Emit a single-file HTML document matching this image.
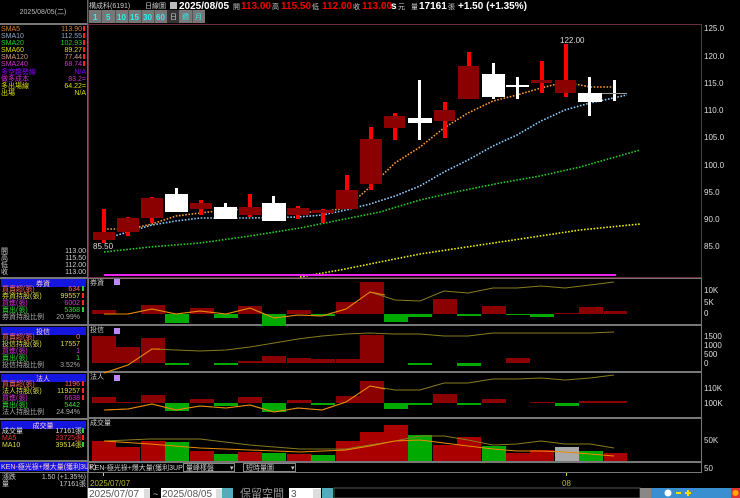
<!DOCTYPE html>
<html><head><meta charset="utf-8"><style>
body{margin:0;background:#000;width:740px;height:498px;overflow:hidden}
svg{display:block}
text{font-family:"Liberation Sans","Noto Sans CJK TC",sans-serif}
.s{font-size:7px}
.b{font-size:10px;font-weight:bold}
.ax{font-size:8px;fill:#ddd}
</style></head><body>
<svg width="740" height="498" viewBox="0 0 740 498" xmlns="http://www.w3.org/2000/svg">
<rect width="740" height="498" fill="#000"/>
<!-- left panel -->
<text x="43" y="14" class="s" fill="#bbb" text-anchor="middle">2025/08/05(二)</text>
<rect x="0" y="23" width="88" height="2" fill="#777"/>
<rect x="87" y="0" width="1.5" height="498" fill="#666"/>
<g class="s">
<text x="1" y="31" fill="#d08030">SMA5</text><text x="82" y="31" fill="#d08030" text-anchor="end">113.90</text>
<text x="1" y="38" fill="#8ac">SMA10</text><text x="82" y="38" fill="#8ac" text-anchor="end">112.55</text>
<text x="1" y="45" fill="#2c2">SMA20</text><text x="82" y="45" fill="#2c2" text-anchor="end">102.93</text>
<text x="1" y="52" fill="#dd0">SMA60</text><text x="82" y="52" fill="#dd0" text-anchor="end">89.27</text>
<text x="1" y="59" fill="#c98">SMA120</text><text x="82" y="59" fill="#c98" text-anchor="end">77.44</text>
<text x="1" y="66" fill="#c3c">SMA240</text><text x="82" y="66" fill="#c3c" text-anchor="end">68.74</text>
<text x="1" y="74" fill="#80f">多空趨勢線</text><text x="86" y="74" fill="#80f" text-anchor="end">N/A</text>
<text x="1" y="81" fill="#c3c">做多成本</text><text x="86" y="81" fill="#c3c" text-anchor="end">83.2=</text>
<text x="1" y="88" fill="#dd0">多出場線</text><text x="86" y="88" fill="#dd0" text-anchor="end">64.22=</text>
<text x="1" y="95" fill="#dd0">出場</text><text x="86" y="95" fill="#dd0" text-anchor="end">N/A</text>
</g>
<g fill="#f22"><rect x="83" y="26" width="2" height="5"/><rect x="83" y="33" width="2" height="5"/><rect x="83" y="40" width="2" height="5"/><rect x="83" y="47" width="2" height="5"/><rect x="83" y="54" width="2" height="5"/><rect x="83" y="61" width="2" height="5"/></g>
<g class="s" fill="#ccc">
<text x="1" y="253">開</text><text x="86" y="253" text-anchor="end">113.00</text>
<text x="1" y="260">高</text><text x="86" y="260" text-anchor="end">115.50</text>
<text x="1" y="267">低</text><text x="86" y="267" text-anchor="end">112.00</text>
<text x="1" y="274">收</text><text x="86" y="274" text-anchor="end">113.00</text>
</g>
<rect x="0" y="277" width="88" height="2" fill="#777"/>
<!-- section headers -->
<g>
<rect x="1" y="279" width="85" height="8" fill="#1515e0"/><text x="43" y="286" class="s" fill="#fcc" text-anchor="middle">券資</text>
<rect x="0" y="324" width="88" height="2" fill="#777"/>
<rect x="1" y="327" width="85" height="8" fill="#1515e0"/><text x="43" y="334" class="s" fill="#fcc" text-anchor="middle">投信</text>
<rect x="0" y="371" width="88" height="2" fill="#777"/>
<rect x="1" y="374" width="85" height="8" fill="#1515e0"/><text x="43" y="381" class="s" fill="#fcc" text-anchor="middle">法人</text>
<rect x="0" y="418" width="88" height="2" fill="#777"/>
<rect x="1" y="421" width="85" height="8" fill="#1515e0"/><text x="43" y="428" class="s" fill="#fcc" text-anchor="middle">成交量</text>
<rect x="0" y="460" width="88" height="2" fill="#777"/>
<rect x="0" y="462" width="87" height="9" fill="#1515e0"/><text x="1" y="469" class="s" fill="#fcc">KEN-極光祿+爆大量(獲利3UP)</text>
<rect x="0" y="472" width="88" height="1" fill="#777"/>
</g>
<g class="s">
<text x="2" y="291" fill="#f66">買賣超(張)</text><text x="80" y="291" fill="#f66" text-anchor="end">634</text>
<text x="2" y="298" fill="#dd4">券資持股(張)</text><text x="80" y="298" fill="#dd4" text-anchor="end">99557</text>
<text x="2" y="305" fill="#d3d">買進(張)</text><text x="80" y="305" fill="#d3d" text-anchor="end">6002</text>
<text x="2" y="312" fill="#3d3">賣出(張)</text><text x="80" y="312" fill="#3d3" text-anchor="end">5368</text>
<text x="2" y="319" fill="#aaa">券資持股比例</text><text x="80" y="319" fill="#aaa" text-anchor="end">20.99%</text>
<text x="2" y="339" fill="#f66">買賣超(張)</text><text x="80" y="339" fill="#f66" text-anchor="end">0</text>
<text x="2" y="346" fill="#dd4">投信持股(張)</text><text x="80" y="346" fill="#dd4" text-anchor="end">17557</text>
<text x="2" y="353" fill="#d3d">買進(張)</text><text x="80" y="353" fill="#d3d" text-anchor="end">1</text>
<text x="2" y="360" fill="#3d3">賣出(張)</text><text x="80" y="360" fill="#3d3" text-anchor="end">1</text>
<text x="2" y="367" fill="#aaa">投信持股比例</text><text x="80" y="367" fill="#aaa" text-anchor="end">3.52%</text>
<text x="2" y="386" fill="#f66">買賣超(張)</text><text x="80" y="386" fill="#f66" text-anchor="end">1196</text>
<text x="2" y="393" fill="#dd4">法人持股(張)</text><text x="80" y="393" fill="#dd4" text-anchor="end">119257</text>
<text x="2" y="400" fill="#d3d">買進(張)</text><text x="80" y="400" fill="#d3d" text-anchor="end">6638</text>
<text x="2" y="407" fill="#3d3">賣出(張)</text><text x="80" y="407" fill="#3d3" text-anchor="end">5442</text>
<text x="2" y="414" fill="#aaa">法人持股比例</text><text x="80" y="414" fill="#aaa" text-anchor="end">24.94%</text>
<text x="2" y="433" fill="#ddd">成交量</text><text x="82" y="433" fill="#ddd" text-anchor="end">17161張</text>
<text x="2" y="440" fill="#e33">MA5</text><text x="82" y="440" fill="#e33" text-anchor="end">23725張</text>
<text x="2" y="447" fill="#dd4">MA10</text><text x="82" y="447" fill="#dd4" text-anchor="end">39514張</text>
<text x="2" y="479" fill="#ccc">漲跌</text><text x="86" y="479" fill="#ccc" text-anchor="end">1.50 (+1.35%)</text>
<text x="2" y="486" fill="#ccc">量</text><text x="86" y="486" fill="#ccc" text-anchor="end">17161張</text>
</g>
<g fill="#3c3"><rect x="82" y="286" width="2" height="5"/><rect x="82" y="307" width="2" height="5"/><rect x="82" y="428" width="2" height="5"/><rect x="82" y="442" width="2" height="5"/></g>
<g fill="#f22"><rect x="82" y="293" width="2" height="5"/><rect x="82" y="300" width="2" height="5"/><rect x="82" y="381" width="2" height="5"/><rect x="82" y="388" width="2" height="5"/><rect x="82" y="395" width="2" height="5"/><rect x="82" y="435" width="2" height="5"/></g>

<!-- top bar -->
<text x="89" y="8" class="s" fill="#ccc">構成科(6191)</text>
<text x="145" y="8" class="s" fill="#ccc">日線圖</text>
<rect x="170" y="2" width="7" height="7" fill="#bbb"/>
<text x="179" y="9" class="b" fill="#fff">2025/08/05</text>
<text x="233" y="9" class="s" fill="#ccc">開</text><text x="241" y="9" class="b" fill="#e00">113.00</text>
<text x="272" y="9" class="s" fill="#ccc">高</text><text x="281" y="9" class="b" fill="#e00">115.50</text>
<text x="312" y="9" class="s" fill="#ccc">低</text><text x="322" y="9" class="b" fill="#e00">112.00</text>
<text x="353" y="9" class="s" fill="#ccc">收</text><text x="362" y="9" class="b" fill="#e00">113.00</text>
<text x="391" y="9" class="b" fill="#fff">s</text><text x="398" y="9" class="s" fill="#ccc">元</text>
<text x="411" y="9" class="s" fill="#ccc">量</text><text x="419" y="9" class="b" fill="#fff">17161</text><text x="448" y="9" class="s" fill="#ccc">張</text>
<text x="458" y="9" class="b" fill="#fff">+1.50 (+1.35%)</text>
<g>
<rect x="89" y="10" width="116" height="13" fill="#777"/>
<rect x="167" y="10" width="12" height="13" fill="#333"/>
<g font-size="8" font-weight="bold" fill="#3ee">
<text x="93" y="20">1</text><text x="106" y="20">5</text><text x="117" y="20">10</text><text x="130" y="20">15</text><text x="143" y="20">30</text><text x="156" y="20">60</text></g>
<g class="s" fill="#ccc"><text x="170" y="19">日</text></g>
<g class="s" fill="#3ee"><text x="182" y="19">週</text><text x="195" y="19">月</text></g>
<g stroke="#555"><line x1="101.5" y1="10" x2="101.5" y2="23"/><line x1="115.5" y1="10" x2="115.5" y2="23"/><line x1="128.5" y1="10" x2="128.5" y2="23"/><line x1="141.5" y1="10" x2="141.5" y2="23"/><line x1="154.5" y1="10" x2="154.5" y2="23"/><line x1="192.5" y1="10" x2="192.5" y2="23"/></g>
</g>

<!-- main chart frame -->
<rect x="88.5" y="24.5" width="613" height="253" fill="none" stroke="#6a2c44"/>
<g class="ax">
<text x="704" y="31">125.0</text><text x="704" y="59">120.0</text><text x="704" y="86">115.0</text><text x="704" y="113">110.0</text><text x="704" y="140">105.0</text><text x="704" y="168">100.0</text><text x="704" y="195">95.0</text><text x="704" y="222">90.0</text><text x="704" y="249">85.0</text>
</g>
<!-- MAs -->
<g fill="none" stroke-width="1.6" stroke-dasharray="1.6 1.6">
<polyline stroke="#ee0" points="300,277 340,270 380,262 420,254 460,248 500,242 540,236 580,230 640,224"/>
<polyline stroke="#2c2" points="104,252 150,247 200,243 250,236 300,228 340,220 380,212 420,200 460,191 500,183 540,176 580,167 640,150"/>
<polyline stroke="#8cf" points="104,239 128,232 152,225 176,221 200,218 250,218 298,217 322,215 346,210 370,204 395,196 420,186 444,172 468,160 493,146 517,135 541,121 565,110 590,103 627,95"/>
<polyline stroke="#f93" points="104,229 130,229 152,224 176,216 200,213 226,210 250,209 274,211 298,212 322,212 346,208 370,187 395,163 420,147 444,128 468,113 493,101 517,95 541,88 565,82 590,87 614,87"/>
</g>
<!-- candles -->
<g>
<g fill="#f00">
<rect x="102" y="209" width="4" height="34"/><rect x="126" y="217" width="4" height="19"/><rect x="150" y="197" width="4" height="26"/><rect x="199" y="200" width="4" height="15"/><rect x="248" y="194" width="4" height="23"/><rect x="296" y="206" width="4" height="13"/><rect x="321" y="209" width="4" height="14"/><rect x="345" y="175" width="4" height="34"/><rect x="369" y="127" width="4" height="63"/><rect x="393" y="113" width="4" height="27"/><rect x="443" y="102" width="4" height="36"/><rect x="467" y="52" width="4" height="47"/><rect x="540" y="61" width="4" height="32"/><rect x="564" y="44" width="4" height="53"/>
</g>
<g fill="#8b0000">
<rect x="93" y="232" width="22" height="8"/><rect x="117" y="218" width="22" height="14"/><rect x="141" y="198" width="22" height="20"/><rect x="190" y="203" width="22" height="6"/><rect x="239" y="207" width="22" height="8"/><rect x="287" y="208" width="22" height="7"/><rect x="312" y="210" width="22" height="3"/><rect x="336" y="190" width="22" height="19"/><rect x="360" y="139" width="22" height="45"/><rect x="384" y="116" width="21" height="12"/><rect x="434" y="110" width="21" height="11"/><rect x="458" y="66" width="21" height="33"/><rect x="531" y="80" width="21" height="3"/><rect x="555" y="80" width="21" height="13"/>
</g>
<g fill="#fff">
<rect x="175" y="188" width="3" height="24"/><rect x="165" y="194" width="23" height="18"/>
<rect x="224" y="203" width="3" height="16"/><rect x="214" y="207" width="23" height="12"/>
<rect x="272" y="196" width="3" height="25"/><rect x="262" y="203" width="24" height="18"/>
<rect x="418" y="80" width="3" height="60"/><rect x="408" y="118" width="24" height="5"/>
<rect x="492" y="63" width="3" height="36"/><rect x="482" y="74" width="23" height="23"/>
<rect x="516" y="77" width="3" height="22"/><rect x="506" y="85" width="23" height="2"/>
<rect x="588" y="77" width="3" height="39"/><rect x="578" y="93" width="24" height="9"/>
<rect x="613" y="80" width="3" height="21"/>
</g>
<rect x="602" y="93" width="25" height="1" fill="#999"/>
<text x="560" y="43" class="ax" fill="#fff">122.00</text>
<text x="93" y="249" class="ax" fill="#fff">85.50</text>
<rect x="104" y="274" width="512" height="2" fill="#e2e"/>
</g>

<!-- sub panels frames -->
<g fill="none" stroke="#777">
<rect x="88.5" y="278.5" width="613" height="46"/>
<rect x="88.5" y="325.5" width="613" height="46"/>
<rect x="88.5" y="372.5" width="613" height="45"/>
<rect x="88.5" y="418.5" width="613" height="43"/>
<rect x="88.5" y="462.5" width="613" height="10"/>
</g>
<g class="s" fill="#ccc"><text x="90" y="285">券資</text><text x="90" y="332">投信</text><text x="90" y="379">法人</text><text x="90" y="425">成交量</text></g>
<g fill="#b8f"><rect x="114" y="279" width="6" height="6"/><rect x="114" y="328" width="6" height="6"/><rect x="114" y="375" width="6" height="6"/></g>
<g class="ax">
<text x="704" y="293">10K</text><text x="704" y="305">5K</text><text x="704" y="316">0</text>
<text x="704" y="339">1500</text><text x="704" y="348">1000</text><text x="704" y="357">500</text><text x="704" y="366">0</text>
<text x="704" y="391">110K</text><text x="704" y="406">100K</text>
<text x="704" y="443">50K</text><text x="704" y="471">50</text>
</g>
<!-- panel1 bars zero 314 -->
<g fill="#8b0000">
<rect x="92" y="310" width="24" height="4"/><rect x="141" y="305" width="24" height="9"/><rect x="190" y="308" width="24" height="6"/><rect x="238" y="306" width="24" height="8"/><rect x="287" y="310" width="24" height="4"/><rect x="336" y="302" width="24" height="12"/><rect x="360" y="282" width="24" height="32"/><rect x="433" y="299" width="24" height="15"/><rect x="482" y="306" width="24" height="8"/><rect x="555" y="313" width="24" height="1"/><rect x="579" y="307" width="24" height="7"/><rect x="604" y="311" width="23" height="3"/>
</g>
<g fill="#0a0">
<rect x="165" y="314" width="24" height="9"/><rect x="214" y="314" width="24" height="4"/><rect x="262" y="314" width="24" height="12"/><rect x="311" y="314" width="24" height="2"/><rect x="384" y="314" width="24" height="8"/><rect x="408" y="314" width="24" height="3"/><rect x="457" y="314" width="24" height="2"/><rect x="506" y="314" width="24" height="1"/><rect x="530" y="314" width="24" height="3"/>
</g>
<!-- panel2 zero 363 -->
<g fill="#8b0000">
<rect x="92" y="336" width="24" height="27"/><rect x="116" y="347" width="24" height="16"/><rect x="141" y="338" width="24" height="25"/><rect x="238" y="361" width="24" height="2"/><rect x="262" y="356" width="24" height="7"/><rect x="287" y="358" width="24" height="5"/><rect x="311" y="359" width="24" height="4"/><rect x="336" y="359" width="24" height="4"/><rect x="360" y="335" width="24" height="28"/><rect x="506" y="358" width="24" height="5"/>
</g>
<g fill="#0a0">
<rect x="165" y="363" width="24" height="2"/><rect x="214" y="363" width="24" height="2"/><rect x="408" y="363" width="24" height="2"/><rect x="457" y="363" width="24" height="3"/>
</g>
<!-- panel3 zero 403 -->
<g fill="#8b0000">
<rect x="92" y="397" width="24" height="6"/><rect x="116" y="402" width="24" height="1"/><rect x="141" y="395" width="24" height="8"/><rect x="190" y="399" width="24" height="4"/><rect x="238" y="397" width="24" height="6"/><rect x="287" y="400" width="24" height="3"/><rect x="336" y="396" width="24" height="7"/><rect x="360" y="381" width="24" height="22"/><rect x="433" y="394" width="24" height="9"/><rect x="482" y="399" width="24" height="4"/><rect x="530" y="402" width="24" height="1"/><rect x="579" y="401" width="48" height="2"/>
</g>
<g fill="#0a0">
<rect x="165" y="403" width="24" height="8"/><rect x="214" y="403" width="24" height="3"/><rect x="262" y="403" width="24" height="9"/><rect x="311" y="403" width="24" height="2"/><rect x="384" y="403" width="24" height="6"/><rect x="408" y="403" width="24" height="2"/><rect x="457" y="403" width="24" height="2"/><rect x="555" y="403" width="24" height="3"/>
</g>
<!-- panel4 volume bottom 461 -->
<g>
<rect x="92" y="441" width="24" height="20" fill="#a00"/><rect x="116" y="447" width="24" height="14" fill="#a00"/><rect x="141" y="441" width="24" height="20" fill="#a00"/><rect x="165" y="442" width="24" height="19" fill="#0a0"/><rect x="190" y="451" width="24" height="10" fill="#a00"/><rect x="214" y="454" width="24" height="7" fill="#0a0"/><rect x="238" y="452" width="24" height="9" fill="#a00"/><rect x="262" y="453" width="24" height="8" fill="#0a0"/><rect x="287" y="454" width="24" height="7" fill="#a00"/><rect x="311" y="455" width="24" height="6" fill="#0a0"/><rect x="336" y="441" width="24" height="20" fill="#a00"/><rect x="360" y="432" width="24" height="29" fill="#a00"/><rect x="384" y="425" width="24" height="36" fill="#a00"/><rect x="408" y="435" width="24" height="26" fill="#0a0"/><rect x="433" y="445" width="24" height="16" fill="#a00"/><rect x="457" y="437" width="24" height="24" fill="#a00"/><rect x="482" y="446" width="24" height="15" fill="#0a0"/><rect x="506" y="453" width="24" height="8" fill="#a00"/><rect x="530" y="450" width="24" height="11" fill="#a00"/><rect x="555" y="447" width="24" height="14" fill="#aaa"/><rect x="579" y="451" width="24" height="10" fill="#0a0"/><rect x="604" y="453" width="23" height="8" fill="#a00"/>
</g>
<!-- panel lines -->
<g fill="none" stroke-width="1">
<polyline stroke="#887a20" points="104,314 128,314 152,309 176,314 200,311 226,314 250,308 274,318 298,315 322,316 346,309 370,292 395,300 420,301 444,291 468,293 493,288 517,288 541,286 565,288 590,285 614,282"/>
<polyline stroke="#e80" points="104,314 128,314 152,309 176,314 200,311 226,314 250,308 274,318 298,315 322,316 346,309 370,292 385,295"/>
<polyline stroke="#887a20" points="104,373 128,365 152,349 176,350 200,351 226,350 250,347 274,343 298,339 322,336 346,334 370,333 395,334 420,334 444,336 468,336 493,333 517,333 541,333 565,333 590,333 614,332"/>
<polyline stroke="#e80" points="104,373 128,365 152,349 160,349"/>
<polyline stroke="#887a20" points="104,410 128,409 152,404 176,410 200,406 226,408 250,405 274,412 298,408 322,410 346,402 370,386 395,390 420,390 444,383 468,383 493,379 517,379 541,378 565,380 590,378 614,375"/>
<polyline stroke="#e80" points="104,410 128,409 152,404 176,410 200,406 226,408 250,405 274,412 298,408 322,410 346,402 370,386 385,389"/>
<polyline stroke="#887a20" points="104,441 150,439 200,439 250,445 300,449 346,449 370,445 395,441 420,436 444,436 468,440 493,445 517,444 541,441 565,444 590,444 614,448"/>
<polyline stroke="#e80" points="104,441 150,444 200,448 250,450 300,452 346,450 370,446 395,441 420,440 444,443 468,446 493,449 517,451 541,451 565,452 590,454 614,456"/>
</g>
<!-- indicator selector row -->
<text x="90" y="470" class="s" fill="#ccc">KEN-極光祿+爆大量(獲利3UP)</text>
<rect x="183.5" y="463.5" width="51" height="8" fill="#000" stroke="#888"/><text x="186" y="470" class="s" fill="#ccc">量峰樣盤</text><text x="230" y="470" class="s" fill="#ccc">▾</text>
<rect x="243.5" y="463.5" width="52" height="8" fill="#000" stroke="#888"/><text x="246" y="470" class="s" fill="#ccc">短時量圖</text><text x="291" y="470" class="s" fill="#ccc">▾</text>
<!-- date axis -->
<rect x="103" y="473" width="1" height="3" fill="#cc4"/><rect x="566" y="473" width="1" height="3" fill="#cc4"/>
<text x="90" y="486" font-size="8" fill="#bb3">2025/07/07</text>
<text x="562" y="486" font-size="8" fill="#bb3">08</text>
<!-- bottom controls -->
<rect x="88" y="488" width="62" height="10" fill="#fff"/><text x="89" y="497" font-size="10" fill="#555">2025/07/07</text>
<rect x="144" y="489" width="6" height="9" fill="#ddd"/>
<text x="153" y="497" font-size="9" fill="#ccc">~</text>
<rect x="161" y="488" width="61" height="10" fill="#fff"/><text x="162" y="497" font-size="10" fill="#555">2025/08/05</text>
<rect x="216" y="489" width="6" height="9" fill="#ddd"/>
<rect x="222" y="488" width="11" height="10" fill="#5ab"/>
<text x="240" y="497" font-size="11" fill="#999" font-family="Noto Sans CJK TC">保留空間</text>
<rect x="289" y="488" width="32" height="10" fill="#fff"/><text x="291" y="497" font-size="10" fill="#555">3</text>
<rect x="313" y="489" width="8" height="9" fill="#ddd"/>
<rect x="322" y="488" width="11" height="10" fill="#5ab"/>
<rect x="334" y="488" width="306" height="10" fill="#000" stroke="#555"/>
<rect x="640" y="488" width="11" height="10" fill="#888"/>
<rect x="651" y="488" width="80" height="10" fill="#3a8fd0"/>
<circle cx="668" cy="493" r="3.5" fill="#fff"/><rect x="676" y="492" width="5" height="2" fill="#fd0"/><rect x="685" y="492" width="6" height="2" fill="#fd0"/><rect x="687" y="490" width="2" height="6" fill="#fd0"/>
<rect x="731" y="488" width="9" height="10" fill="#d33"/><circle cx="735.5" cy="493" r="3" fill="#fa0"/>
</svg>
</body></html>
